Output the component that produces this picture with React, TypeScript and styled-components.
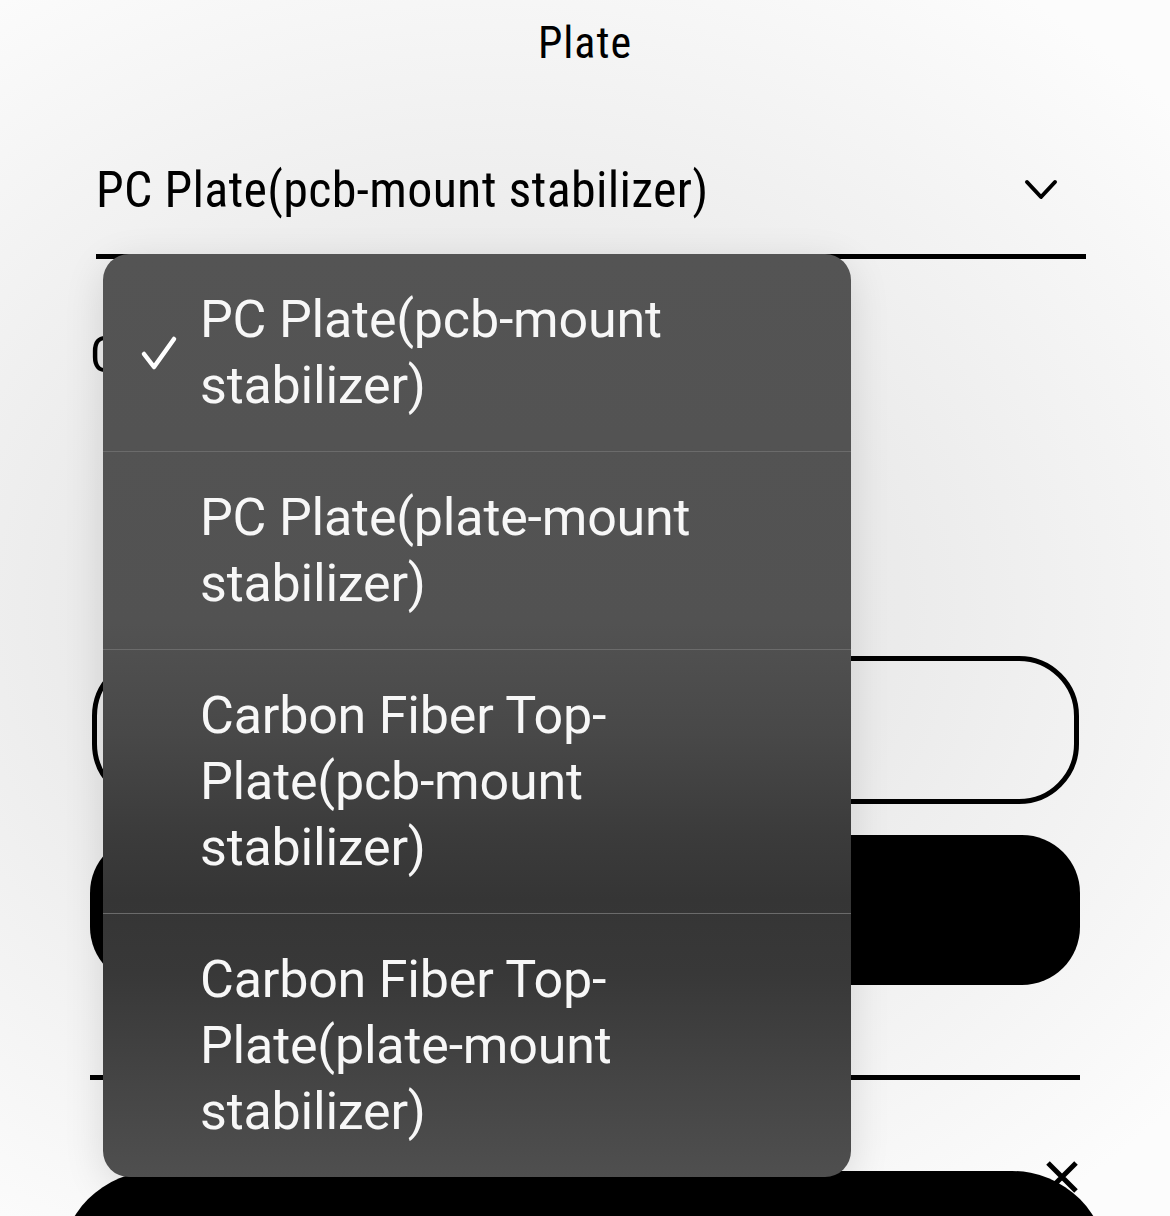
import React from "react";
import styled, { createGlobalStyle } from "styled-components";

const GlobalStyle = createGlobalStyle`
  html, body {
    margin: 0;
    padding: 0;
  }
  body {
    font-family: "Roboto Condensed", "Liberation Sans Narrow", "DejaVu Sans Condensed", Roboto, sans-serif;
    color: #000;
  }
`;

const plateOptions = [
  "PC Plate(pcb-mount stabilizer)",
  "PC Plate(plate-mount stabilizer)",
  "Carbon Fiber Top-Plate(pcb-mount stabilizer)",
  "Carbon Fiber Top-Plate(plate-mount stabilizer)",
];

const Page = styled.div`
  position: relative;
  height: 1216px;
  overflow: hidden;
  box-sizing: border-box;
  padding: 0 90px;
  display: flex;
  flex-direction: column;
  background: radial-gradient(ellipse 78% 62% at 42% 50%, #e7e7e7 0%, #ebebeb 45%, #fcfcfc 100%);

  & > * {
    flex-shrink: 0;
  }
`;

const Title = styled.h2`
  margin: 0;
  height: 86px;
  line-height: 86px;
  text-align: center;
  font-size: 44px;
  font-weight: 400;
  letter-spacing: 1px;
`;

const SelectBox = styled.div`
  margin: 40px -6px 0 6px;
  height: 128px;
  display: flex;
  align-items: center;
  justify-content: space-between;
  border-bottom: 5px solid #000;
  padding-right: 28px;
`;

const SelectValue = styled.span`
  font-size: 50px;
  letter-spacing: 0.3px;
`;

const FieldLabel = styled.div`
  margin-top: 66px;
  line-height: 60px;
  font-size: 50px;
`;

const OutlineButton = styled.button`
  margin: 271px 1px 0 2px;
  height: 148px;
  box-sizing: border-box;
  border: 5px solid #000;
  border-radius: 60px;
  background: transparent;
  font: inherit;
  font-size: 46px;
`;

const SolidButton = styled.button`
  margin-top: 31px;
  height: 150px;
  border: none;
  border-radius: 58px;
  background: #000;
  color: #fff;
  font: inherit;
  font-size: 46px;
`;

const Divider = styled.hr`
  margin: 90px 0 0;
  height: 5px;
  border: none;
  background: #000;
`;

const BottomSheet = styled.div`
  position: relative;
  margin: 91px -28px 0 -30px;
  height: 220px;
  border-radius: 96px 96px 0 0;
  background: #000;
`;

const CloseIcon = styled.svg`
  position: absolute;
  top: -12px;
  right: 28px;
  width: 36px;
  height: 36px;
`;

const Menu = styled.ul`
  position: absolute;
  left: 103px;
  top: 254px;
  width: 748px;
  margin: 0;
  padding: 0;
  list-style: none;
  border-radius: 26px;
  overflow: hidden;
  background: linear-gradient(
    180deg,
    #545454 0%,
    #525252 40%,
    #484848 52%,
    #3b3b3b 63%,
    #353535 70%,
    #383838 78%,
    #454545 90%,
    #4f4f4f 100%
  );
  box-shadow: 0 10px 40px rgba(0, 0, 0, 0.12);
`;

const MenuItem = styled.li`
  position: relative;
  padding: 33px 48px 32px 97px;
  font-family: Roboto, "Noto Sans", sans-serif;
  font-size: 52px;
  line-height: 66px;
  letter-spacing: -0.2px;
  color: #f7f7f7;
  & + & {
    border-top: 1px solid #6b6b6b;
  }
`;

const Check = styled.svg`
  position: absolute;
  left: 37px;
  top: 81px;
  width: 38px;
  height: 36px;
`;

const App = () => {
  const selected = 0;

  return (
    <>
      <GlobalStyle />
      <Page>
        <Title>Plate</Title>
        <SelectBox>
          <SelectValue>{plateOptions[selected]}</SelectValue>
          <svg width="34" height="22" viewBox="0 0 34 22" fill="none">
            <path d="M3 3 L17 18 L31 3" stroke="#000" strokeWidth="4" strokeLinecap="round" strokeLinejoin="round" />
          </svg>
        </SelectBox>
        <FieldLabel>Quantity</FieldLabel>
        <OutlineButton>Add to cart</OutlineButton>
        <SolidButton>Buy it now</SolidButton>
        <Divider />
        <BottomSheet>
          <CloseIcon viewBox="0 0 36 36" fill="none">
            <path d="M4 4 L32 32 M32 4 L4 32" stroke="#000" strokeWidth="5" />
          </CloseIcon>
        </BottomSheet>

        <Menu>
          {plateOptions.map((option, i) => (
            <MenuItem key={option}>
              {i === selected && (
                <Check viewBox="0 0 38 36" fill="none">
                  <path d="M4 19 L14 32 L34 4" stroke="#fff" strokeWidth="4.5" strokeLinecap="round" strokeLinejoin="round" />
                </Check>
              )}
              {option}
            </MenuItem>
          ))}
        </Menu>
      </Page>
    </>
  );
};

export default App;
